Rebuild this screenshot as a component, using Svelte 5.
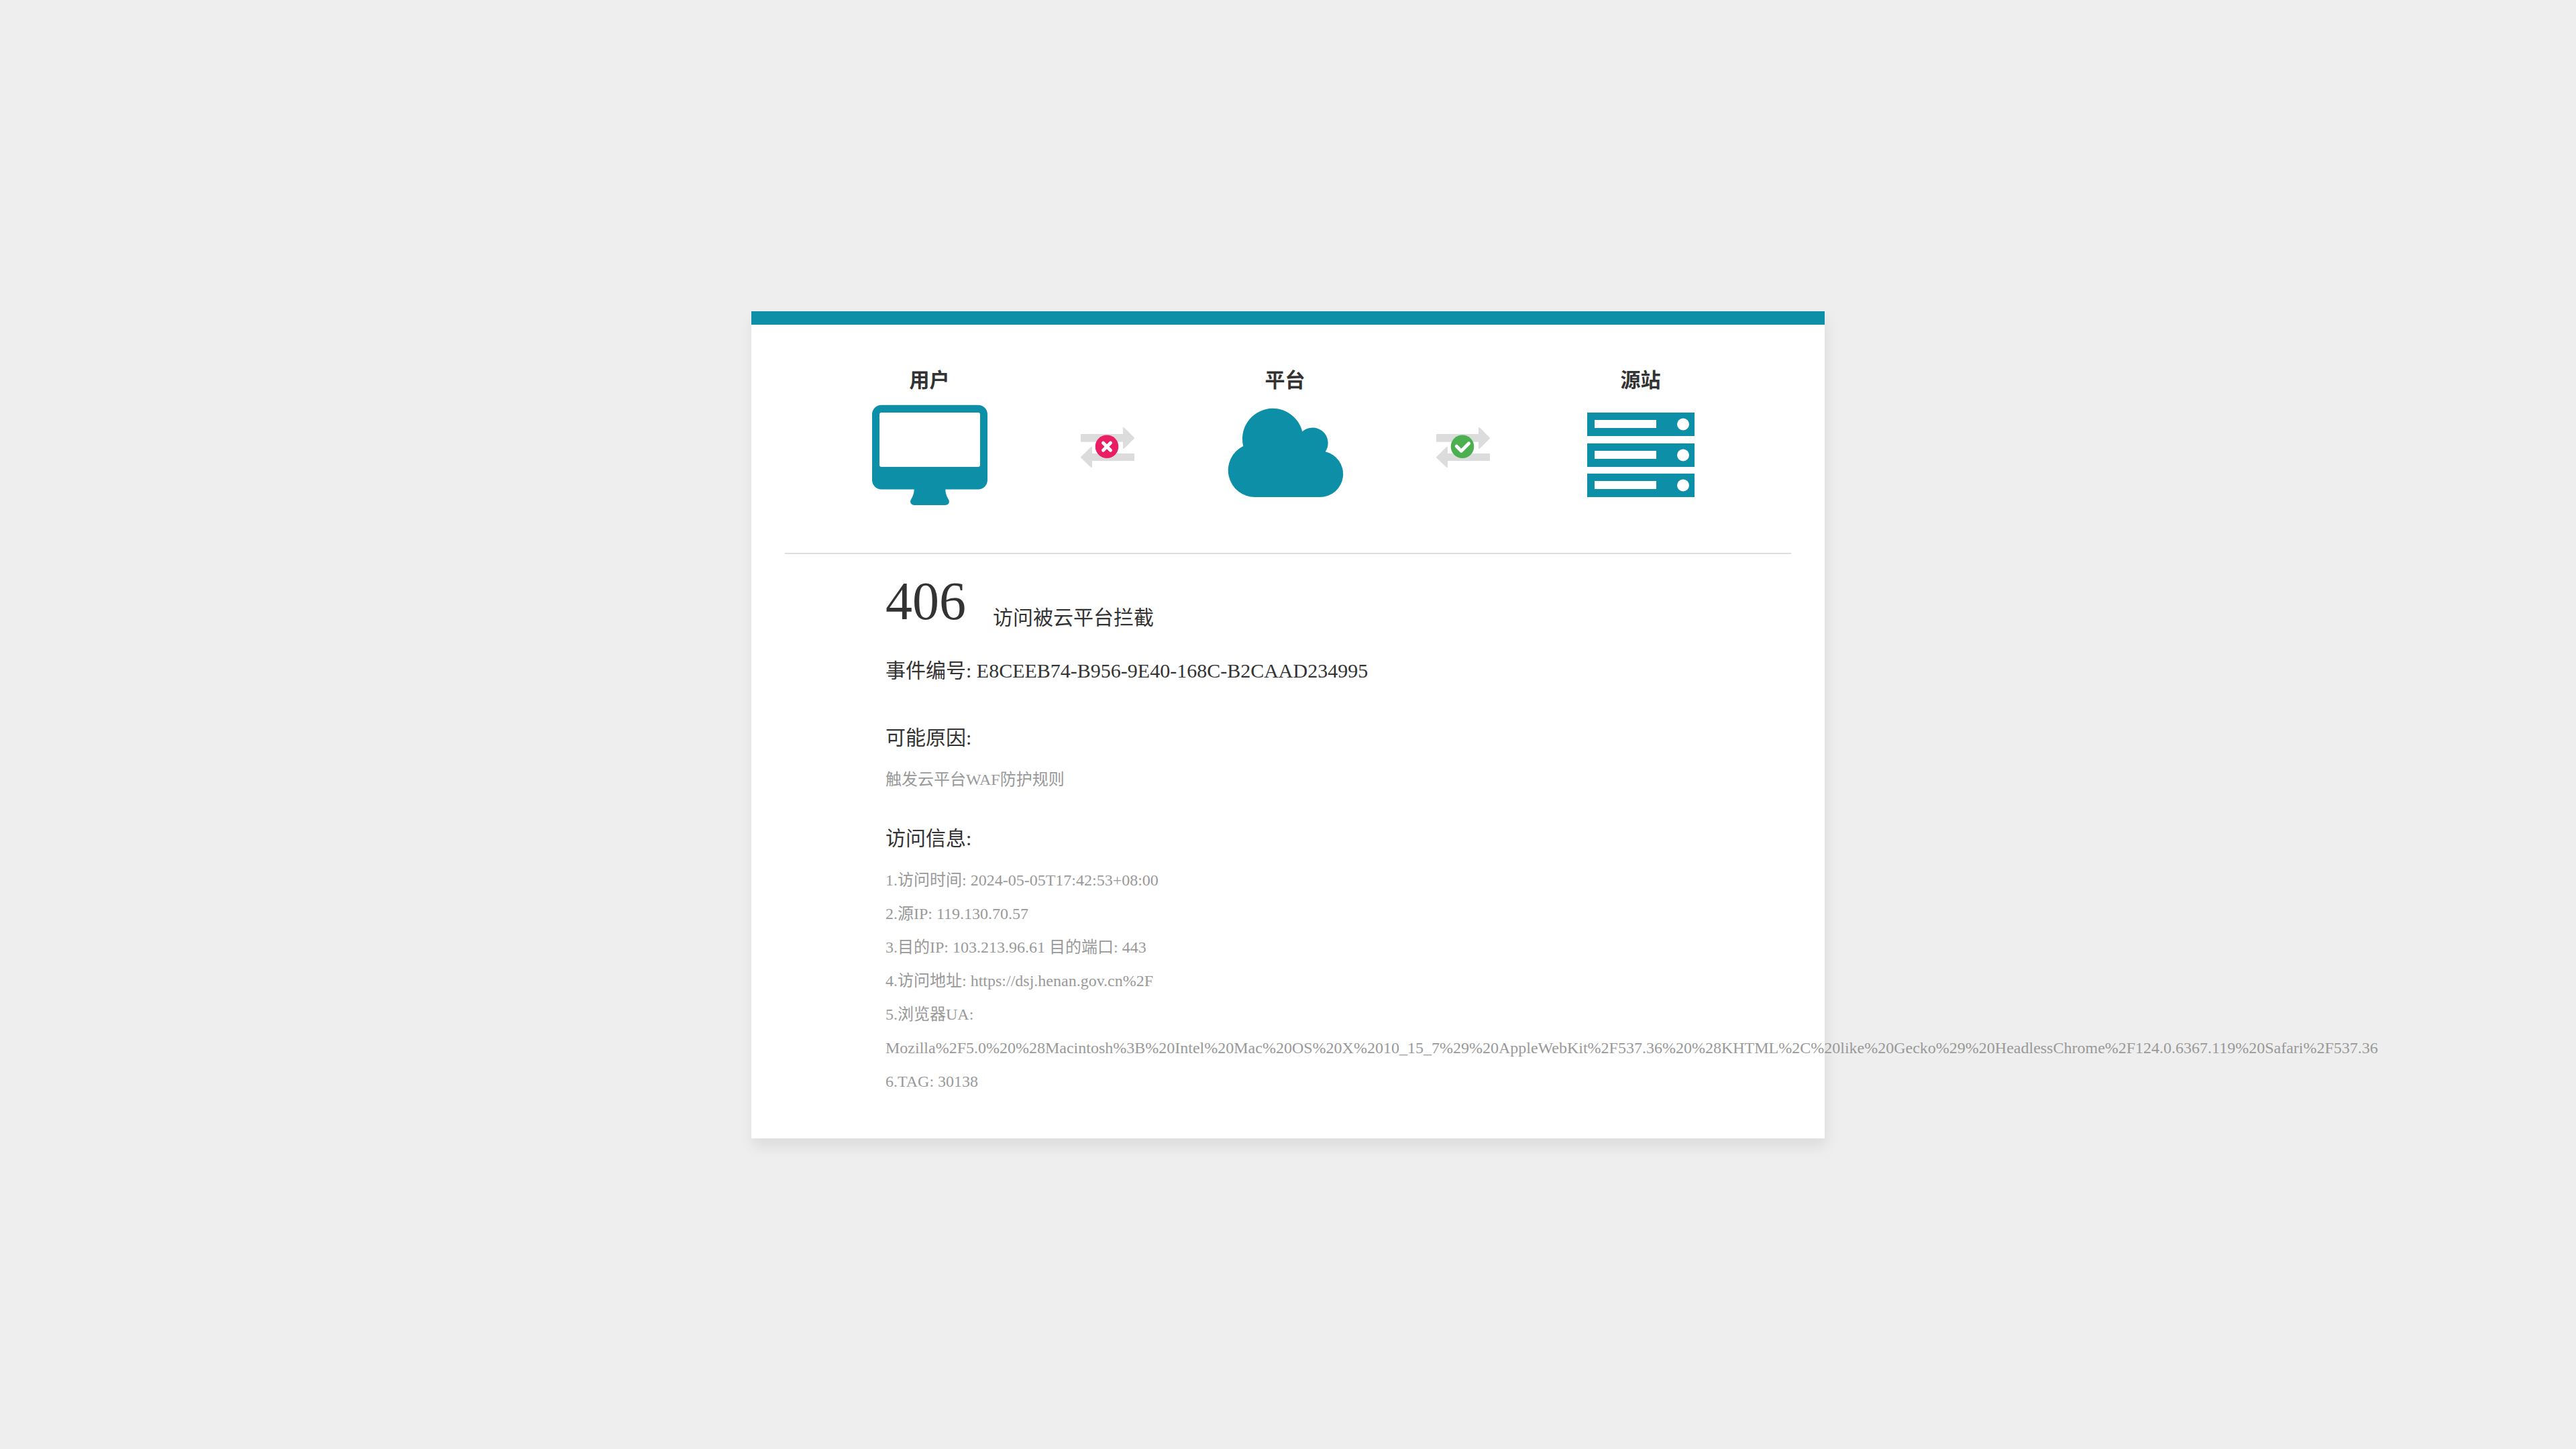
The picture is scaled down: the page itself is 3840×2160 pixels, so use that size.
<script>
  const nodes = [
    { kind: 'user', title: '用户' },
    { kind: 'blocked' },
    { kind: 'cloud', title: '平台' },
    { kind: 'passed' },
    { kind: 'server', title: '源站' }
  ];
  const rackRows = [17, 63, 108];
  const details = [
    '1.访问时间: 2024-05-05T17:42:53+08:00',
    '2.源IP: 119.130.70.57',
    '3.目的IP: 103.213.96.61 目的端口: 443',
    '4.访问地址: https://dsj.henan.gov.cn%2F',
    '5.浏览器UA: Mozilla%2F5.0%20%28Macintosh%3B%20Intel%20Mac%20OS%20X%2010_15_7%29%20AppleWebKit%2F537.36%20%28KHTML%2C%20like%20Gecko%29%20HeadlessChrome%2F124.0.6367.119%20Safari%2F537.36',
    '6.TAG: 30138'
  ];
</script>

<main class="page">
  <article class="card">
    <section class="chain">
      {#each nodes as node}
        {#if node.title}
          <div class="node">
            <h2>{node.title}</h2>
            <svg class="device" viewBox="0 0 180 160" aria-hidden="true">
              {#if node.kind === 'user'}
                <path fill-rule="evenodd" d="M18 5.7H162A14 14 0 0 1 176 19.7V117.5A14 14 0 0 1 162 131.5H113.3C113.5 139 116 143 118 146.500C120.500 151 117.500 155 113 155H67C62.500 155 59.500 151 62 146.500C64 143 66.500 139 66.700 131.500H18A14 14 0 0 1 4 117.500V19.700A14 14 0 0 1 18 5.700ZM18 17A3 3 0 0 0 15 20V95A3 3 0 0 0 18 98H162A3 3 0 0 0 165 95V20A3 3 0 0 0 162 17Z" />
              {:else if node.kind === 'cloud'}
                <path d="M44.5 143A40 40 0 0 1 27.3 67A45.2 45.2 0 0 1 115.3 45.3A23 23 0 0 1 149.7 75.3A34.3 34.3 0 0 1 141.7 143Z" />
              {:else}
                {#each rackRows as y}
                  <rect x="10" {y} width="160" height="35" />
                  <rect class="hole" x="21" y={y + 11} width="92" height="12" />
                  <circle class="hole" cx="153" cy={y + 17.5} r="9" />
                {/each}
              {/if}
            </svg>
          </div>
        {:else}
          <svg class="link" viewBox="0 0 80 60" aria-hidden="true">
            <path class="arrows" d="M1 10H63V1Q63.500 -.5 65 .5L79.500 15Q80.500 16 79.500 17L65 31.500Q63.500 32.500 63 31V21.700H1Q0 21.700 0 20.700V11Q0 10 1 10ZM79 39H17V30Q16.500 28.500 15 29.500L.5 43.700Q-.5 44.700 .5 45.700L15 59.500Q16.500 60.500 17 59V50H79Q80 50 80 49V40Q80 39 79 39Z" />
            {#if node.kind === 'blocked'}
              <circle class="bad" cx="39" cy="28.700" r="17.300" />
              <path class="mark" d="M33.500 23.200L44.500 34.200M44.500 23.200L33.500 34.200" />
            {:else}
              <circle class="good" cx="39" cy="28.700" r="17.300" />
              <path class="mark" d="M30.300 28.200L37.300 35.200L48.500 24" />
            {/if}
          </svg>
        {/if}
      {/each}
    </section>

    <section class="report">
      <header class="summary">
        <h1>406</h1>
        <p>访问被云平台拦截</p>
      </header>
      <h3 class="event">事件编号: E8CEEB74-B956-9E40-168C-B2CAAD234995</h3>

      <h3>可能原因:</h3>
      <p class="text">触发云平台WAF防护规则</p>

      <h3>访问信息:</h3>
      <ul class="text">
        {#each details as line}
          <li>{line}</li>
        {/each}
      </ul>
    </section>
  </article>
</main>

<style>
  :global(body) {
    background: #eee;
  }
  .page {
    min-height: 100vh;
    display: flex;
    align-items: center;
    justify-content: center;
    color: #333;
    font-family: "Liberation Serif", "Noto Sans CJK SC", serif;
    font-size: 30px;
    line-height: 50px;
  }
  h1, h2, h3, p, ul {
    margin: 0;
    padding: 0;
    font-weight: 400;
    font-size: inherit;
  }
  .card {
    box-sizing: border-box;
    width: 100%;
    max-width: 1600px;
    padding: 58px 50px 60px;
    border-top: 20px solid #0d8fa7;
    background: #fff;
    box-shadow: 2px 12px 20px rgba(0, 0, 0, 0.08);
  }
  .chain {
    display: grid;
    grid-template-columns: repeat(5, 1fr);
    justify-items: center;
    align-items: center;
    padding: 0 92px 66px 83px;
    border-bottom: 2px solid #ddd;
  }
  .node {
    display: flex;
    flex-direction: column;
    align-items: center;
    gap: 6px;
  }
  h2 {
    font-weight: 700;
  }
  .device {
    width: 180px;
    height: 160px;
    fill: #0d8fa7;
  }
  .hole {
    fill: #fff;
  }
  .link {
    width: 80px;
    height: 60px;
    margin-top: 34px;
  }
  .arrows {
    fill: #dcdcdc;
  }
  .bad {
    fill: #e91e63;
  }
  .good {
    fill: #4caf50;
  }
  .mark {
    fill: none;
    stroke: #fff;
    stroke-width: 5;
    stroke-linecap: round;
    stroke-linejoin: round;
  }
  .report {
    padding: 20px 150px 0;
  }
  .summary {
    display: flex;
    align-items: flex-end;
    gap: 40px;
  }
  h1 {
    font-size: 80px;
    line-height: 100px;
  }
  .event {
    margin-top: 29px;
  }
  h3 {
    margin-top: 38px;
    margin-bottom: 12px;
  }
  .event + h3 {
    margin-top: 50px;
  }
  .text {
    color: #999;
    font-size: 24px;
  }
  ul {
    list-style: none;
  }
</style>
